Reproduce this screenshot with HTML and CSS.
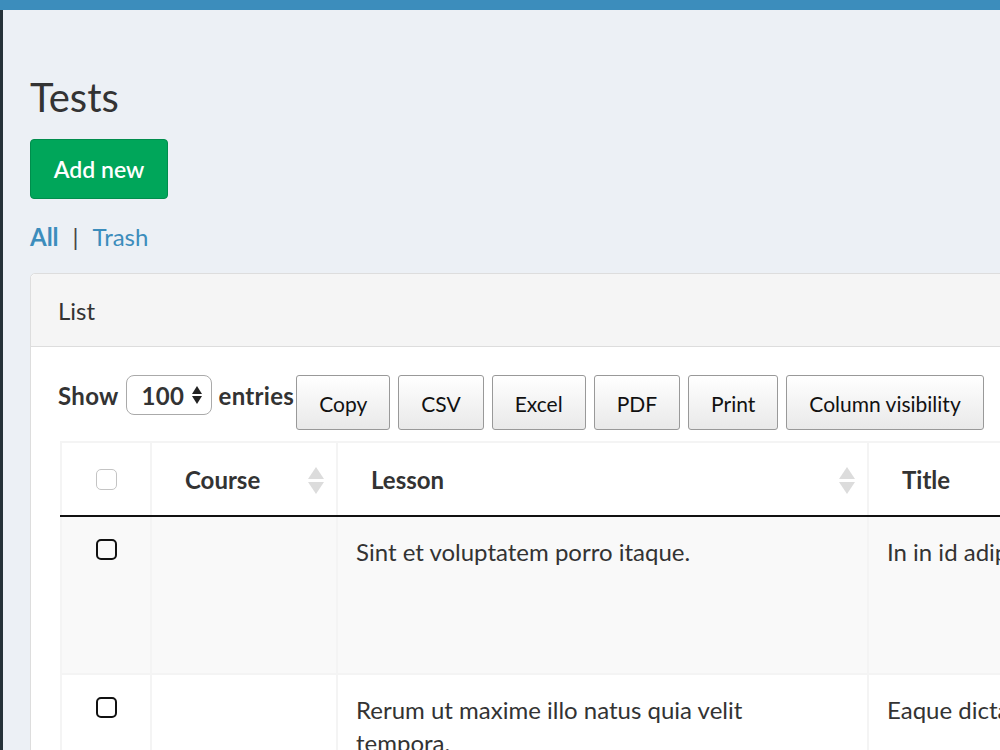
FILE: index.html
```html
<!DOCTYPE html>
<html lang="en">
<head>
  <meta charset="UTF-8">
  <title>Tests</title>
  <link rel="stylesheet" href="styles.css">
</head>
<body>
  <header class="topbar"></header>
  <div class="wrapper">
    <aside class="sidebar"></aside>
    <main class="content">
      <h1 class="page-title">Tests</h1>
      <a href="#" class="btn-success">Add new</a>
      <ul class="filters">
        <li><a href="#" class="active">All</a></li>
        <li class="sep">|</li>
        <li><a href="#">Trash</a></li>
      </ul>

      <div class="panel">
        <div class="panel-heading">List</div>
        <div class="panel-body">
          <div class="toolbar">
            <label class="length">Show
              <span class="select">100
                <span class="arrows"><i class="up"></i><i class="down"></i></span>
              </span>
              entries</label>
            <div class="dt-buttons">
              <button>Copy</button>
              <button>CSV</button>
              <button>Excel</button>
              <button>PDF</button>
              <button>Print</button>
              <button>Column visibility</button>
            </div>
          </div>

          <table class="datatable">
            <thead>
              <tr>
                <th class="col-check"><span class="check light"></span></th>
                <th class="col-course sorting">Course</th>
                <th class="col-lesson sorting">Lesson</th>
                <th class="col-title sorting">Title</th>
                <th class="col-desc sorting">Description</th>
              </tr>
            </thead>
            <tbody>
              <tr class="odd">
                <td class="col-check"><span class="check"></span></td>
                <td></td>
                <td>Sint et voluptatem porro itaque.</td>
                <td>In in id adipisci.</td>
                <td></td>
              </tr>
              <tr>
                <td class="col-check"><span class="check"></span></td>
                <td></td>
                <td>Rerum ut maxime illo natus quia velit tempora.</td>
                <td>Eaque dicta quo.</td>
                <td></td>
              </tr>
            </tbody>
          </table>
        </div>
      </div>
    </main>
  </div>
</body>
</html>
```

FILE: styles.css
```css
:root {
  --blue: #3c8dbc;
  --green: #00a65a;
  --bg: #ecf0f5;
  --text: #333333;
  --line: #f4f4f4;
}
* { margin: 0; padding: 0; box-sizing: border-box; }
html, body { overflow: hidden; }
body {
  font-family: Lato, "Liberation Sans", sans-serif;
  font-size: 24px;
  line-height: 33px;
  color: var(--text);
  background: var(--bg);
  height: 750px;
}
a { text-decoration: none; color: var(--blue); }

.topbar { height: 10px; background: var(--blue); }
.wrapper { display: flex; min-height: 740px; }
.sidebar { width: 3px; background: #263238; flex-shrink: 0; }
.content { padding: 65px 0 0 27px; }

.page-title { font-size: 40px; line-height: 44px; font-weight: 400; margin-bottom: 20px; }

.btn-success {
  display: inline-flex; align-items: center; justify-content: center;
  width: 138px; height: 60px;
  background: var(--green); color: #fff;
  border: 1px solid #008d4c; border-radius: 4px;
  font-size: 23px; font-weight: 600;
}

.filters { list-style: none; display: flex; gap: 14px; margin: 21px 0 20px; }
.filters .active { font-weight: 700; }
.filters .sep { color: #444; }

.panel {
  width: 1300px;
  background: #fff;
  border: 1px solid #dddddd;
  border-radius: 5px;
}
.panel-heading {
  height: 73px;
  padding: 0 27px;
  display: flex; align-items: center;
  background: #f5f5f5;
  border-bottom: 1px solid #dddddd;
  border-radius: 5px 5px 0 0;
}
.panel-body { padding: 28px 0 0 27px; }

.toolbar { display: flex; align-items: flex-start; height: 55px; }
.length { display: flex; align-items: center; gap: 7px; height: 40px; font-weight: 700; letter-spacing: 0.3px; }
.select {
  display: inline-flex; align-items: center; gap: 8px;
  width: 86px; height: 40px; padding-left: 15px;
  border: 1px solid #aaaaaa; border-radius: 8px;
}
.arrows { display: flex; flex-direction: column; gap: 2px; }
.arrows i { width: 0; height: 0; border-left: 5px solid transparent; border-right: 5px solid transparent; }
.arrows .up { border-bottom: 8px solid #222; }
.arrows .down { border-top: 8px solid #222; }

.dt-buttons { display: flex; gap: 8px; margin-left: 2px; }
.dt-buttons button {
  height: 55px;
  padding: 2px 22px 0;
  font-family: inherit; font-size: 21px; color: #111;
  background: linear-gradient(to bottom, #ffffff 0%, #e9e9e9 100%);
  border: 1px solid #999999; border-radius: 3px;
}

.datatable { margin: 11px 0 0 2px; border-collapse: collapse; table-layout: fixed; width: 1250px; }
.datatable th, .datatable td { border: 2px solid var(--line); vertical-align: top; }
.datatable th {
  height: 74px;
  padding: 0 30px 0 33px;
  text-align: left; vertical-align: middle;
  border-bottom: 2px solid #111111;
  position: relative;
}
.datatable td { padding: 18px 40px 18px 18px; }
.datatable tr.odd td { background: #f9f9f9; height: 158px; }
.col-check { width: 90px; }
.col-course { width: 186px; }
.col-lesson { width: 531px; }
.col-title { width: 260px; }
.datatable .col-check { text-align: center; padding-left: 0; padding-right: 0; }
.datatable tbody .col-check { padding-top: 22px; }

.sorting::before, .sorting::after {
  content: ''; position: absolute; right: 12px;
  border-left: 8px solid transparent; border-right: 8px solid transparent;
}
.sorting::before { top: 24px; border-bottom: 12px solid #dcdcdc; }
.sorting::after { top: 39px; border-top: 12px solid #dcdcdc; }

.check {
  display: inline-block; width: 21px; height: 21px;
  border: 2px solid #111; border-radius: 5px; vertical-align: top;
}
.check.light { display: block; margin: 0 auto; border: 1px solid #c4c4c4; }
```
